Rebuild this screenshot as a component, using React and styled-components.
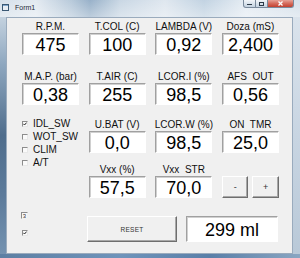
import React from 'react';
import styled, { createGlobalStyle } from 'styled-components';

const Global = createGlobalStyle`
  html, body { margin: 0; padding: 0; background: #ffffff; }
  body {
    width: 300px; height: 258px; overflow: hidden;
    font-family: "Liberation Sans", Arial, sans-serif;
  }
`;

const Window = styled.div`
  width: 300px;
  height: 258px;
  display: flex;
  flex-direction: column;
  overflow: hidden;
`;

const TitleBar = styled.div`
  height: 17px;
  flex: none;
  display: flex;
  align-items: flex-start;
  background:
    linear-gradient(180deg, rgba(255,255,255,0) 0%, rgba(255,255,255,0.35) 100%),
    linear-gradient(90deg, #d5e0ea 0%, #e3eaf1 12%, #b7c9da 24%, #98b1c9 30%, #c9d7e4 40%, #dfe7ef 55%, #c2d3e2 68%, #e5ecf3 82%, #d6e1eb 100%);
`;

const AppIcon = styled.svg`
  width: 7px;
  height: 7px;
  margin: 4px 0 0 2px;
  flex: none;
`;

const Title = styled.span`
  margin-left: 6px;
  font-size: 7px;
  line-height: 15px;
  color: #1e2a36;
`;

const Spacer = styled.div`
  flex: 1;
`;

const CaptionGroup = styled.div`
  display: flex;
  margin-right: 6px;
  height: 8px;
`;

const CaptionButton = styled.div`
  width: ${p => p.$w}px;
  height: 8px;
  box-sizing: border-box;
  display: flex;
  align-items: center;
  justify-content: center;
  border: 1px solid #7a8a9c;
  border-top: none;
  border-left-width: ${p => (p.$first ? 1 : 0)}px;
  border-radius: ${p => (p.$first ? '0 0 0 3px' : p.$last ? '0 0 3px 0' : '0')};
  background: ${p => (p.$close
    ? 'linear-gradient(180deg, #e6a297 0%, #d56b5c 50%, #c2402f 100%)'
    : 'linear-gradient(180deg, #f2f5f8 0%, #dae3ec 50%, #c5d3e1 100%)')};
`;

const Body = styled.div`
  flex: 1;
  display: flex;
  min-height: 0;
`;

const SideFrame = styled.div`
  width: ${p => p.$w}px;
  flex: none;
  background: ${p => p.$bg};
`;

const BottomFrame = styled.div`
  height: 4px;
  flex: none;
  background: linear-gradient(90deg, #5d7fa3 0%, #6f94bb 40%, #5a7fa8 70%, #8aa6c2 100%);
`;

const Client = styled.div`
  flex: 1;
  box-sizing: border-box;
  background: #f0f0f0;
  border: 1px solid #9aabbd;
  padding: 2px 0 0 15px;
  display: flex;
  flex-direction: column;
`;

const Grid = styled.div`
  display: grid;
  grid-template-columns: repeat(4, 57px);
  grid-template-rows: 50px 48px 45px 35px;
  column-gap: 9.67px;
`;

const Field = styled.div`
  display: flex;
  flex-direction: column;
  align-items: center;
  grid-column: ${p => p.$col};
  grid-row: ${p => p.$row};
`;

const Label = styled.div`
  height: 13px;
  line-height: 13px;
  font-size: 10px;
  color: #111;
  white-space: pre;
`;

const ValueBox = styled.div`
  width: 100%;
  height: 22px;
  box-sizing: border-box;
  background: #ffffff;
  border: 1px solid;
  border-color: #a0a0a0 #ffffff #ffffff #a0a0a0;
  box-shadow: inset 1px 1px 0 #d0d0d0;
  display: flex;
  align-items: center;
  justify-content: center;
  font-size: 18px;
  line-height: 22px;
  padding-top: 2px;
  color: #000;
`;

const CheckList = styled.div`
  grid-column: 1;
  grid-row: 3 / span 2;
  display: flex;
  flex-direction: column;
  margin-top: -1px;
`;

const CheckRow = styled.div`
  height: 13px;
  display: flex;
  align-items: center;
  gap: 5px;
  font-size: 10px;
  color: #111;
`;

const CheckBox = styled.div`
  width: 6px;
  height: 6px;
  box-sizing: border-box;
  flex: none;
  background: #fafafa;
  border: 1px solid;
  border-color: #8c8c8c #e8e8e8 #e8e8e8 #8c8c8c;
  display: flex;
  align-items: center;
  justify-content: center;
`;

const StepGroup = styled.div`
  grid-column: 4;
  grid-row: 4;
  display: flex;
  gap: 4px;
  margin-top: 13px;
  height: 22px;
`;

const Button = styled.div`
  box-sizing: border-box;
  flex: ${p => (p.$w ? 'none' : 1)};
  width: ${p => (p.$w ? `${p.$w}px` : 'auto')};
  height: ${p => p.$h}px;
  margin-top: ${p => p.$mt || 0}px;
  background: #f0f0f0;
  border: 1px solid;
  border-color: #ffffff #6e6e6e #6e6e6e #ffffff;
  box-shadow: inset -1px -1px 0 #a8a8a8;
  display: flex;
  align-items: center;
  justify-content: center;
  font-size: ${p => p.$fs}px;
  letter-spacing: ${p => p.$ls || 0}px;
  color: #333;
`;

const BottomRow = styled.div`
  display: flex;
  align-items: flex-start;
  margin-top: 14px;
`;

const LeftStack = styled.div`
  width: 65px;
  flex: none;
  display: flex;
  flex-direction: column;
  align-items: flex-start;
  gap: 11px;
`;

const TinyBox = styled.div`
  width: 7px;
  height: 7px;
  box-sizing: border-box;
  margin-left: -1px;
  background: #f8f8f8;
  border: 1px solid;
  border-color: #8c8c8c #f0f0f0 #f0f0f0 #8c8c8c;
  font-size: 6px;
  line-height: 6px;
  text-align: center;
  color: #333;
`;

const MlBox = styled(ValueBox)`
  width: 92px;
  height: 26px;
  margin-left: 9px;
  margin-top: 4px;
`;

const Tick = () => (
  <svg width="4" height="4" viewBox="0 0 4 4">
    <path d="M0.4 1.8 L1.5 3 L3.6 0.6" stroke="#222" strokeWidth="1" fill="none" />
  </svg>
);

const fields = [
  ['R.P.M.', '475', 1, 1], ['T.COL (C)', '100', 2, 1], ['LAMBDA (V)', '0,92', 3, 1], ['Doza (mS)', '2,400', 4, 1],
  ['M.A.P. (bar)', '0,38', 1, 2], ['T.AIR (C)', '255', 2, 2], ['LCOR.I (%)', '98,5', 3, 2], ['AFS  OUT', '0,56', 4, 2],
  ['U.BAT (V)', '0,0', 2, 3], ['LCOR.W (%)', '98,5', 3, 3], ['ON  TMR', '25,0', 4, 3],
  ['Vxx (%)', '57,5', 2, 4], ['Vxx  STR', '70,0', 3, 4],
];

const checks = [['IDL_SW', true], ['WOT_SW', false], ['CLIM', false], ['A/T', false]];

export default function App() {
  return (
    <>
      <Global />
      <Window>
        <TitleBar>
          <AppIcon viewBox="0 0 7 7">
            <rect x="0" y="0" width="7" height="7" fill="#3a5874" />
            <rect x="1" y="2" width="5" height="4" fill="#e8eef4" />
            <rect x="1" y="1" width="5" height="1" fill="#7fa6cc" />
          </AppIcon>
          <Title>Form1</Title>
          <Spacer />
          <CaptionGroup>
            <CaptionButton $w={13} $first>
              <svg width="5" height="3" viewBox="0 0 5 3"><rect x="0" y="2" width="5" height="1" fill="#2c3a48" /></svg>
            </CaptionButton>
            <CaptionButton $w={12}>
              <svg width="5" height="4" viewBox="0 0 5 4"><rect x="0.5" y="0.5" width="4" height="3" fill="none" stroke="#2c3a48" strokeWidth="1" /></svg>
            </CaptionButton>
            <CaptionButton $w={26} $close $last>
              <svg width="5" height="5" viewBox="0 0 5 5"><path d="M0.5 0.5 L4.5 4.5 M4.5 0.5 L0.5 4.5" stroke="#ffffff" strokeWidth="1.3" /></svg>
            </CaptionButton>
          </CaptionGroup>
        </TitleBar>
        <Body>
          <SideFrame $w={6} $bg="linear-gradient(180deg, #c4d2df 0%, #8ea7bf 20%, #4f6d8c 50%, #5c7b9b 75%, #7492b0 100%)" />
          <Client>
            <Grid>
              {fields.map(([label, value, col, row]) => (
                <Field key={label} $col={col} $row={row}>
                  <Label>{label}</Label>
                  <ValueBox>{value}</ValueBox>
                </Field>
              ))}
              <CheckList>
                {checks.map(([name, on]) => (
                  <CheckRow key={name}>
                    <CheckBox>{on && <Tick />}</CheckBox>
                    {name}
                  </CheckRow>
                ))}
              </CheckList>
              <StepGroup>
                <Button $h={22} $fs={9}>-</Button>
                <Button $h={22} $fs={9}>+</Button>
              </StepGroup>
            </Grid>
            <BottomRow>
              <LeftStack>
                <TinyBox>3</TinyBox>
                <CheckBox><Tick /></CheckBox>
              </LeftStack>
              <Button $w={90} $h={26} $mt={4} $fs={6.5} $ls={0.3}>RESET</Button>
              <MlBox>299 ml</MlBox>
            </BottomRow>
          </Client>
          <SideFrame $w={7} $bg="linear-gradient(180deg, #dae3ec 0%, #c8d5e2 50%, #b9c9d8 100%)" />
        </Body>
        <BottomFrame />
      </Window>
    </>
  );
}
